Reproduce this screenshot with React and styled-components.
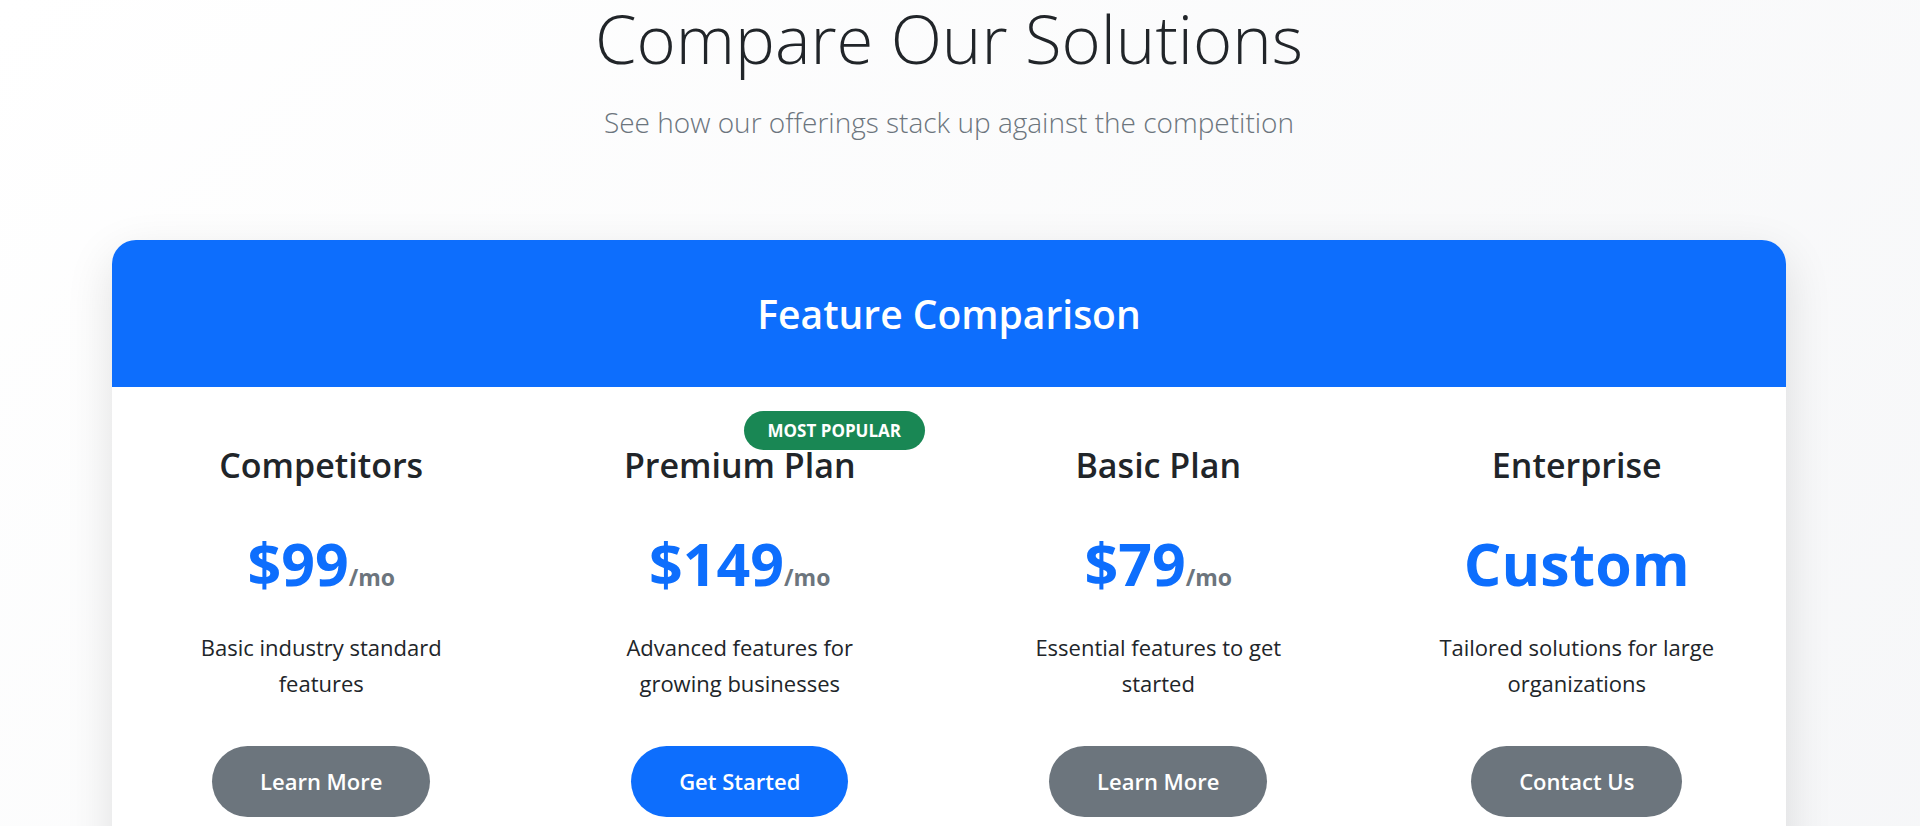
import styled, { createGlobalStyle } from "styled-components";

const GlobalStyle = createGlobalStyle`
  * { box-sizing: border-box; }
  html::-webkit-scrollbar { width: 15px; }
  html::-webkit-scrollbar-track { background: #f8f9fa; }
  html::-webkit-scrollbar-thumb {
    background: #8a8a8a;
    border-radius: 8px;
    border: 3px solid #f8f9fa;
  }
  body {
    margin: 0;
    font-family: "Open Sans", "Noto Sans", sans-serif;
    color: #212529;
    background: linear-gradient(135deg, #ffffff 0%, #f3f4f6 100%);
    min-height: 100vh;
  }
`;

const Page = styled.main`
  padding: 0 0 120px 112px;
`;

const Intro = styled.header`
  width: 1674px;
  text-align: center;
  margin-bottom: 100px;
`;

const Title = styled.h1`
  margin: 0;
  font-size: 67px;
  font-weight: 300;
  line-height: 77px;
  color: #212529;
`;

const Subtitle = styled.p`
  margin: 27px 0 0;
  font-size: 28px;
  font-weight: 300;
  line-height: 36px;
  color: #6c757d;
`;

const Card = styled.section`
  width: 1674px;
  background: #fff;
  border-radius: 24px;
  overflow: hidden;
  box-shadow: 0 16px 48px rgba(0, 0, 0, 0.12);
`;

const CardHeader = styled.div`
  background: #0d6efd;
  height: 147px;
  display: flex;
  align-items: center;
  justify-content: center;
`;

const CardTitle = styled.h2`
  margin: 0;
  color: #fff;
  font-size: 39px;
  font-weight: 600;
`;

const Plans = styled.div`
  display: grid;
  grid-template-columns: repeat(4, 1fr);
`;

const Plan = styled.div`
  position: relative;
  padding: 59px 56px 56px;
  display: flex;
  flex-direction: column;
  align-items: center;
  text-align: center;
`;

const Badge = styled.span`
  position: absolute;
  top: 24px;
  right: 24px;
  background: #198754;
  color: #fff;
  font-size: 17px;
  font-weight: 700;
  line-height: 1;
  padding: 11px 24px;
  border-radius: 999px;
`;

const PlanName = styled.h3`
  margin: 0;
  font-size: 34px;
  font-weight: 600;
  line-height: 38px;
`;

const Price = styled.div`
  margin-top: 44px;
  color: #0d6efd;
  font-size: 59px;
  font-weight: 700;
  line-height: 70px;
`;

const Per = styled.span`
  font-size: 23px;
  line-height: 1;
  color: #6c757d;
`;

const Description = styled.p`
  margin: 31px 0 0;
  font-size: 22px;
  line-height: 36px;
`;

const Button = styled.button`
  margin-top: 45px;
  border: 0;
  border-radius: 999px;
  padding: 19px 48px;
  font-family: inherit;
  font-size: 22px;
  font-weight: 600;
  line-height: 33px;
  color: #fff;
  background: ${(p) => (p.$primary ? "#0d6efd" : "#6c757d")};
  cursor: pointer;
`;

const FeatureTable = styled.table`
  width: 100%;
  border-collapse: collapse;
  font-size: 18px;
  td, th {
    padding: 22px 32px;
    border-top: 1px solid #dee2e6;
    text-align: center;
  }
  td:first-child, th:first-child { text-align: left; }
`;

const plans = [
  { name: "Competitors", price: "$99", desc: "Basic industry standard features", cta: "Learn More" },
  { name: "Premium Plan", price: "$149", desc: "Advanced features for growing businesses", cta: "Get Started", popular: true },
  { name: "Basic Plan", price: "$79", desc: "Essential features to get started", cta: "Learn More" },
  { name: "Enterprise", price: "Custom", desc: "Tailored solutions for large organizations", cta: "Contact Us", custom: true },
];

const features = [
  ["Users", "5", "Unlimited", "3", "Unlimited"],
  ["Storage", "50 GB", "1 TB", "20 GB", "Custom"],
  ["Analytics", "Basic", "Advanced", "Basic", "Advanced"],
  ["API Access", "—", "✓", "—", "✓"],
  ["Priority Support", "—", "✓", "—", "✓"],
  ["Custom Integrations", "—", "✓", "—", "✓"],
  ["SLA Guarantee", "—", "99.9%", "—", "99.99%"],
  ["Dedicated Manager", "—", "—", "—", "✓"],
  ["Onboarding", "Self-serve", "Guided", "Self-serve", "White-glove"],
  ["Security Audits", "—", "Annual", "—", "Quarterly"],
];

export default function App() {
  return (
    <>
      <GlobalStyle />
      <Page>
        <Intro>
          <Title>Compare Our Solutions</Title>
          <Subtitle>See how our offerings stack up against the competition</Subtitle>
        </Intro>

        <Card>
          <CardHeader>
            <CardTitle>Feature Comparison</CardTitle>
          </CardHeader>
          <Plans>
            {plans.map((p) => (
              <Plan key={p.name}>
                {p.popular && <Badge>MOST POPULAR</Badge>}
                <PlanName>{p.name}</PlanName>
                <Price>
                  {p.price}
                  {!p.custom && <Per>/mo</Per>}
                </Price>
                <Description>{p.desc}</Description>
                <Button $primary={p.popular}>{p.cta}</Button>
              </Plan>
            ))}
          </Plans>
          <FeatureTable>
            <thead>
              <tr>
                <th>Feature</th>
                {plans.map((p) => (
                  <th key={p.name}>{p.name}</th>
                ))}
              </tr>
            </thead>
            <tbody>
              {features.map((row) => (
                <tr key={row[0]}>
                  {row.map((cell, i) => (
                    <td key={i}>{cell}</td>
                  ))}
                </tr>
              ))}
            </tbody>
          </FeatureTable>
        </Card>
      </Page>
    </>
  );
}
